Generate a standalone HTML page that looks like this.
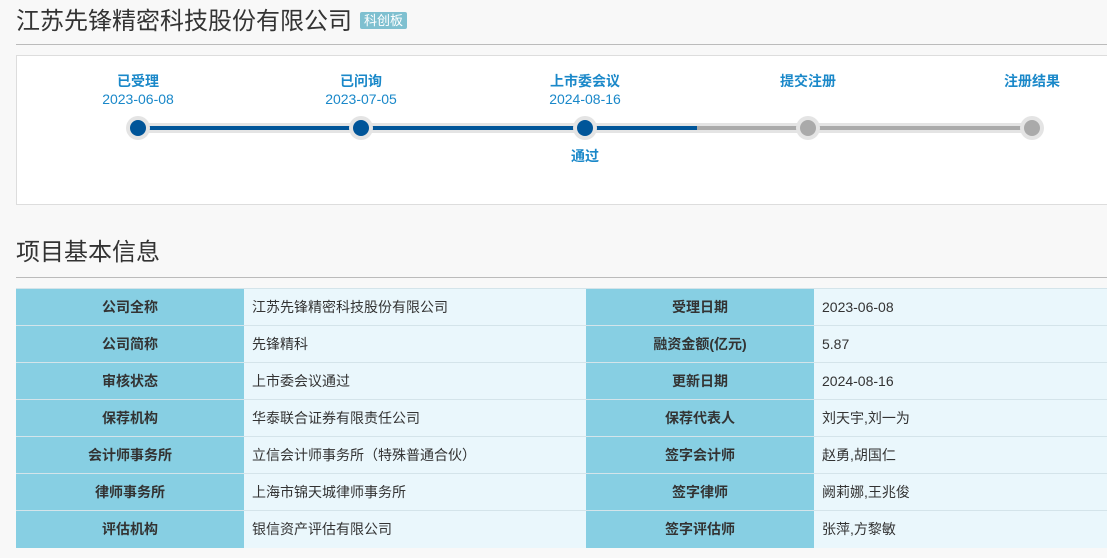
<!DOCTYPE html>
<html><head><meta charset="utf-8"><style>
*{margin:0;padding:0;box-sizing:border-box}
body{width:1107px;height:558px;overflow:hidden;background:#f8f8f8;font-family:"Liberation Sans","Noto Sans CJK SC",sans-serif;position:relative}
.a{position:absolute}
.h1{left:16px;top:6px;font-size:24px;color:#333;white-space:nowrap;line-height:32px}
.tag{display:inline-block;vertical-align:4px;margin-left:8px;background:#7fc0d0;color:#fff;font-size:13px;line-height:17px;padding:0 4px;border-radius:2px}
.hr{left:16px;right:0;height:1px;background:#bbb}
.box{left:16px;top:55px;width:1100px;height:150px;background:#fff;border:1px solid #ddd}
.lbl{width:160px;margin-left:-80px;text-align:center;color:#1a88c9;font-size:14px;line-height:18px}
.lbl b{font-weight:bold}
.dot{width:24px;height:24px;border-radius:50%;background:#e4e4e4;margin:-12px 0 0 -12px}
.dot i{position:absolute;left:4px;top:4px;width:16px;height:16px;border-radius:50%}
table{position:absolute;left:16px;top:288px;border-collapse:collapse;font-size:14px;color:#333}
td{height:37px;border-top:1px solid #d4e4ea;padding:0 8px}
td.k{background:#87cfe3;font-weight:bold;text-align:center;width:228px}
td.v{background:#eaf7fc}
</style></head><body>
<div class="a h1">江苏先锋精密科技股份有限公司<span class="tag">科创板</span></div>
<div class="a hr" style="top:44px"></div>
<div class="a box"></div>
<div class="a" style="left:138px;top:123px;width:894px;height:10px;background:#e4e4e4"></div>
<div class="a" style="left:138px;top:126px;width:559px;height:4px;background:#005599"></div>
<div class="a" style="left:697px;top:126px;width:335px;height:4px;background:#aaa"></div>
<div class="a dot" style="left:138px;top:128px"><i style="background:#005599"></i></div>
<div class="a dot" style="left:361px;top:128px"><i style="background:#005599"></i></div>
<div class="a dot" style="left:585px;top:128px"><i style="background:#005599"></i></div>
<div class="a dot" style="left:808px;top:128px"><i style="background:#aaa"></i></div>
<div class="a dot" style="left:1032px;top:128px"><i style="background:#aaa"></i></div>
<div class="a lbl" style="left:138px;top:72px"><b>已受理</b><br>2023-06-08</div>
<div class="a lbl" style="left:361px;top:72px"><b>已问询</b><br>2023-07-05</div>
<div class="a lbl" style="left:585px;top:72px"><b>上市委会议</b><br>2024-08-16</div>
<div class="a lbl" style="left:808px;top:72px"><b>提交注册</b></div>
<div class="a lbl" style="left:1032px;top:72px"><b>注册结果</b></div>
<div class="a lbl" style="left:585px;top:147px"><b>通过</b></div>
<div class="a" style="left:16px;top:237px;font-size:24px;color:#333;line-height:32px">项目基本信息</div>
<div class="a hr" style="top:277px"></div>
<table>
<tr><td class="k">公司全称</td><td class="v" style="width:342px">江苏先锋精密科技股份有限公司</td><td class="k">受理日期</td><td class="v" style="width:293px">2023-06-08</td></tr>
<tr><td class="k">公司简称</td><td class="v">先锋精科</td><td class="k">融资金额(亿元)</td><td class="v">5.87</td></tr>
<tr><td class="k">审核状态</td><td class="v">上市委会议通过</td><td class="k">更新日期</td><td class="v">2024-08-16</td></tr>
<tr><td class="k">保荐机构</td><td class="v">华泰联合证券有限责任公司</td><td class="k">保荐代表人</td><td class="v">刘天宇,刘一为</td></tr>
<tr><td class="k">会计师事务所</td><td class="v">立信会计师事务所（特殊普通合伙）</td><td class="k">签字会计师</td><td class="v">赵勇,胡国仁</td></tr>
<tr><td class="k">律师事务所</td><td class="v">上海市锦天城律师事务所</td><td class="k">签字律师</td><td class="v">阙莉娜,王兆俊</td></tr>
<tr><td class="k">评估机构</td><td class="v">银信资产评估有限公司</td><td class="k">签字评估师</td><td class="v">张萍,方黎敏</td></tr>
</table>
</body></html>
